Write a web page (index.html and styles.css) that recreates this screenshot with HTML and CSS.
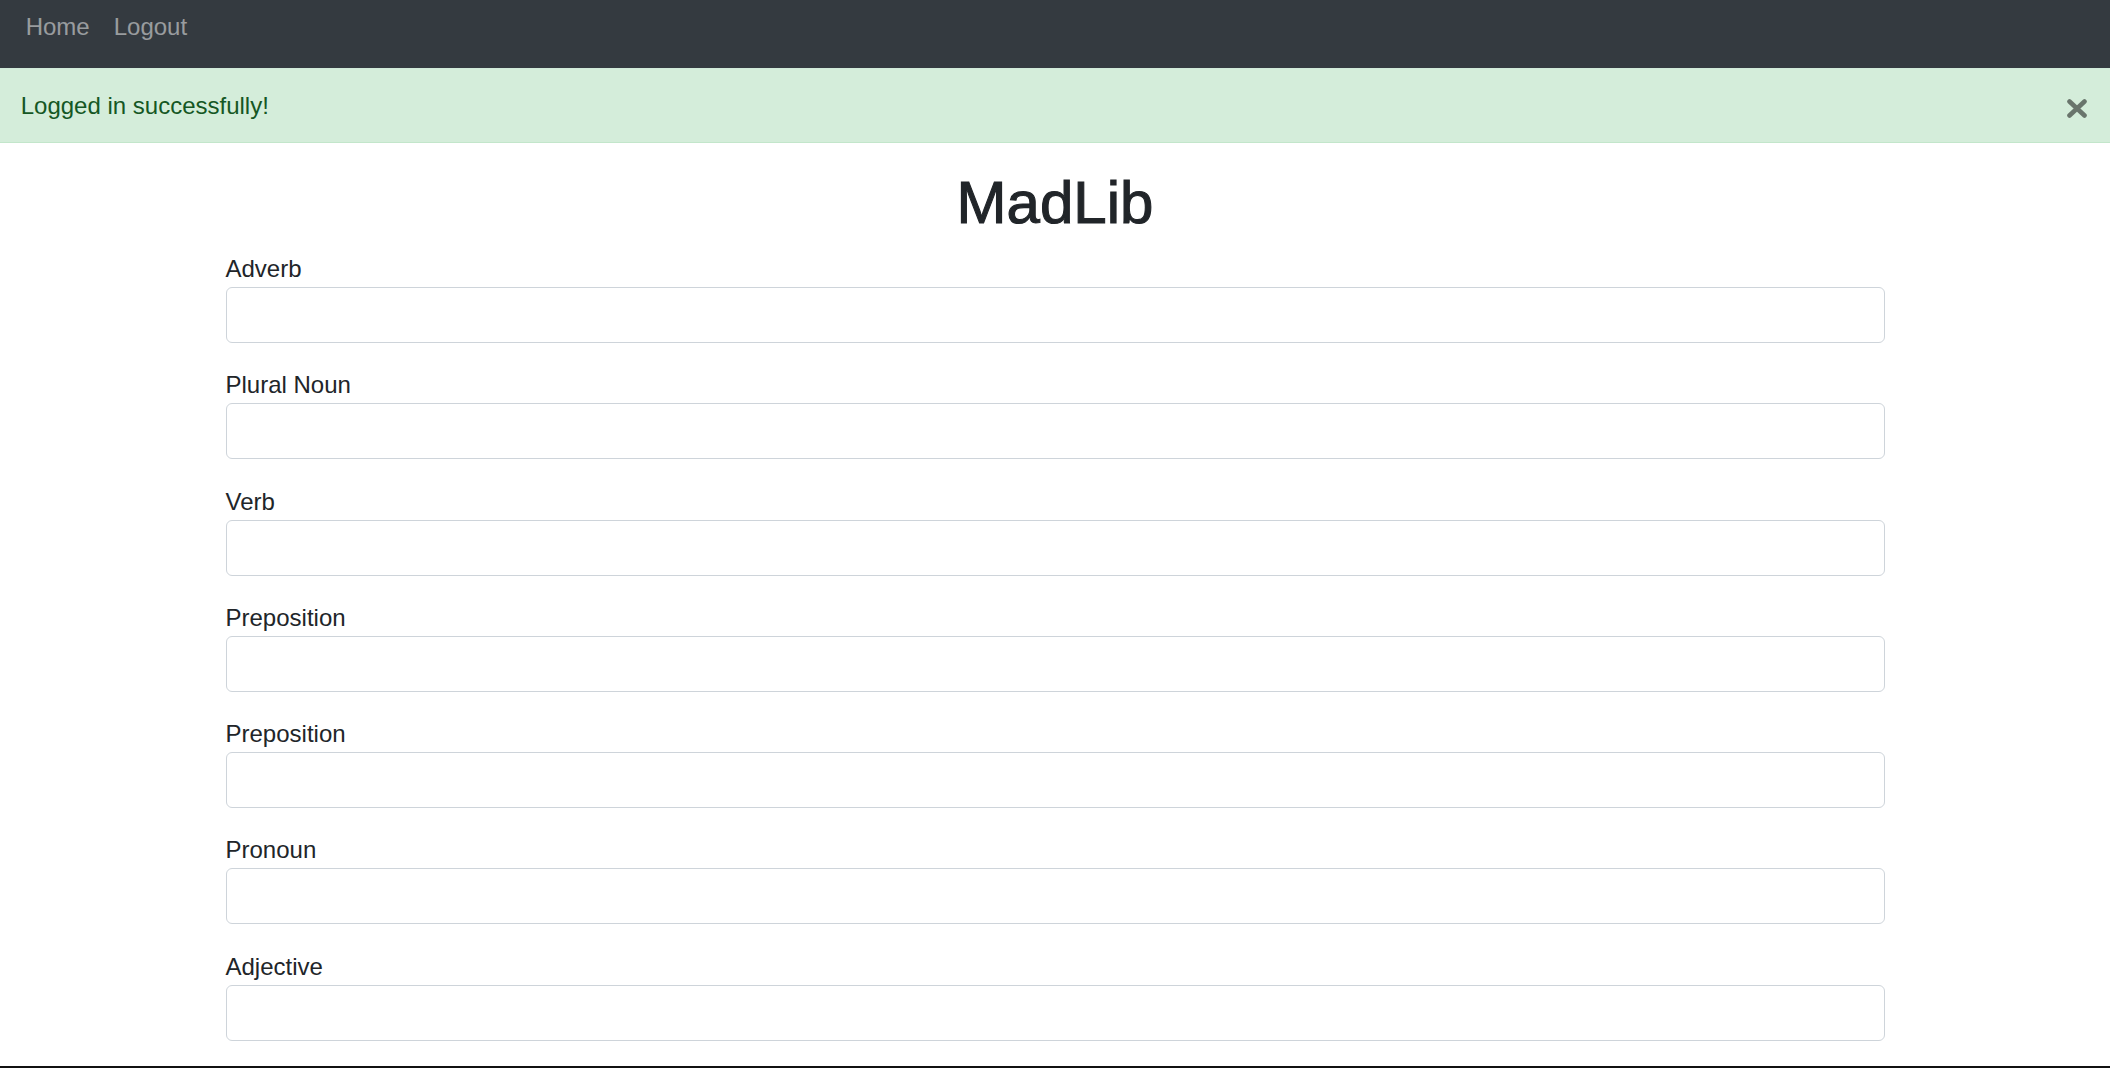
FILE: index.html
```html
<!DOCTYPE html>
<html lang="en">
<head>
<meta charset="utf-8">
<title>MadLib</title>
<link rel="stylesheet" href="styles.css">
</head>
<body>
<nav class="navbar">
  <a class="nav-link" href="#">Home</a>
  <a class="nav-link" href="#">Logout</a>
</nav>
<div class="alert">
  <span class="alert-text">Logged in successfully!</span>
  <button class="close" type="button" aria-label="Close">
    <svg width="20" height="19" viewBox="0 0 20 19"><path d="M2.5 2.5 L17.5 16.5 M17.5 2.5 L2.5 16.5" stroke="#000" stroke-width="4.6" stroke-linecap="round"/></svg>
  </button>
</div>
<main class="container">
  <h1 class="title">MadLib</h1>
  <form class="form">
    <div class="group"><label class="label">Adverb</label><input class="input" type="text"></div>
    <div class="group"><label class="label">Plural Noun</label><input class="input" type="text"></div>
    <div class="group"><label class="label">Verb</label><input class="input" type="text"></div>
    <div class="group"><label class="label">Preposition</label><input class="input" type="text"></div>
    <div class="group"><label class="label">Preposition</label><input class="input" type="text"></div>
    <div class="group"><label class="label">Pronoun</label><input class="input" type="text"></div>
    <div class="group"><label class="label">Adjective</label><input class="input" type="text"></div>
  </form>
</main>
<div class="window-edge"></div>
</body>
</html>
```
FILE: styles.css
```css
html, body {
  margin: 0;
  padding: 0;
}
body {
  font-family: "Liberation Sans", Arial, Helvetica, sans-serif;
  font-size: 24px;
  line-height: 36px;
  color: #212529;
  background: #fff;
  overflow: hidden;
}
.navbar {
  height: 68px;
  box-sizing: border-box;
  background: #343a40;
  display: flex;
  align-items: flex-start;
  padding: 9px 0 0 13.7px;
}
.nav-link {
  color: rgba(255, 255, 255, 0.5);
  text-decoration: none;
  padding: 0 12px;
  line-height: 36px;
}
.alert {
  height: 75px;
  box-sizing: border-box;
  background: #d4edda;
  color: #155724;
  border-top: 1.5px solid #d1eada;
  border-bottom: 1.5px solid #c3e6cb;
  padding: 0 23px 0 20.7px;
  display: flex;
  align-items: center;
  justify-content: space-between;
  margin-bottom: 24px;
}
.alert-text {
  line-height: 36px;
}
.close {
  background: none;
  border: 0;
  padding: 0;
  margin-top: 6px;
  opacity: 0.5;
  display: flex;
  cursor: pointer;
}
.container {
  width: 1659px;
  margin: 0 auto;
}
.title {
  margin: 0 0 12px;
  font-size: 60px;
  line-height: 72px;
  font-weight: 500;
  text-align: center;
  -webkit-text-stroke: 1.1px #212529;
}
.group {
  margin-bottom: 24.3px;
}
.label {
  display: block;
  line-height: 36px;
}
.input {
  display: block;
  width: 100%;
  height: 56px;
  box-sizing: border-box;
  border: 1.5px solid #ced4da;
  border-radius: 6px;
  background: #fff;
  margin: 0;
}
.window-edge {
  position: fixed;
  left: 0;
  right: 0;
  bottom: 0;
  height: 2px;
  background: #111;
}
```
